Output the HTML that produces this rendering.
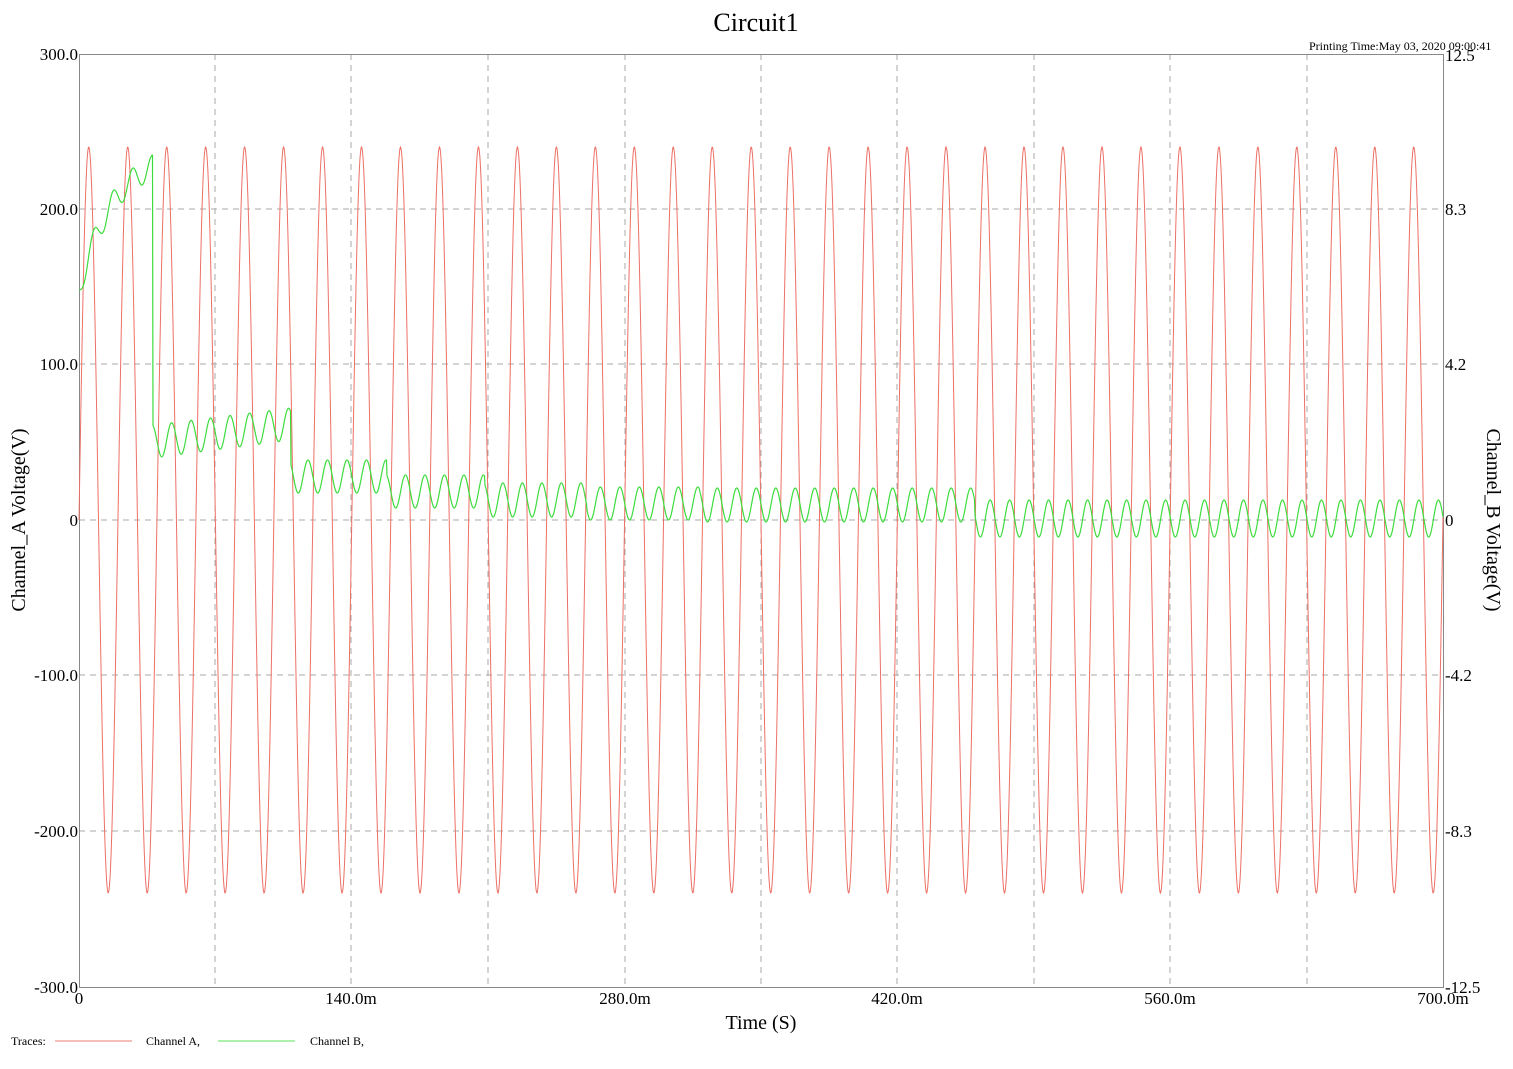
<!DOCTYPE html>
<html><head><meta charset="utf-8"><style>
html,body{margin:0;padding:0;background:#fff;}
svg{display:block;}
text{font-family:"Liberation Serif",serif;fill:#000;}
</style></head><body>
<svg id="s" width="1513" height="1069" viewBox="0 0 1513 1069" xmlns="http://www.w3.org/2000/svg">
<text x="756" y="31" font-size="26" text-anchor="middle">Circuit1</text>
<text x="1309" y="50" font-size="12">Printing Time:May 03, 2020 09:00:41</text>
<g stroke="#aaa" stroke-width="1" stroke-dasharray="6,5" fill="none">
<line x1="215" y1="54" x2="215" y2="987"/><line x1="351" y1="54" x2="351" y2="987"/>
<line x1="488" y1="54" x2="488" y2="987"/><line x1="625" y1="54" x2="625" y2="987"/>
<line x1="761" y1="54" x2="761" y2="987"/><line x1="897" y1="54" x2="897" y2="987"/>
<line x1="1034" y1="54" x2="1034" y2="987"/><line x1="1170" y1="54" x2="1170" y2="987"/>
<line x1="1307" y1="54" x2="1307" y2="987"/>
<line x1="79" y1="209" x2="1443" y2="209"/><line x1="79" y1="364" x2="1443" y2="364"/>
<line x1="79" y1="520" x2="1443" y2="520"/><line x1="79" y1="675" x2="1443" y2="675"/>
<line x1="79" y1="831" x2="1443" y2="831"/>
</g>
<rect x="79.5" y="54.5" width="1364" height="933" fill="none" stroke="#888" stroke-width="1"/>
<g id="traces"></g>
<g font-size="17">
<text x="78" y="60" text-anchor="end">300.0</text>
<text x="78" y="215" text-anchor="end">200.0</text>
<text x="78" y="370" text-anchor="end">100.0</text>
<text x="78" y="526" text-anchor="end">0</text>
<text x="78" y="681" text-anchor="end">-100.0</text>
<text x="78" y="837" text-anchor="end">-200.0</text>
<text x="78" y="993" text-anchor="end">-300.0</text>
<text x="1445" y="61">12.5</text>
<text x="1445" y="215">8.3</text>
<text x="1445" y="370">4.2</text>
<text x="1445" y="526">0</text>
<text x="1445" y="681">-4.2</text>
<text x="1445" y="837">-8.3</text>
<text x="1445" y="993">-12.5</text>
<text x="79" y="1004" text-anchor="middle">0</text>
<text x="351" y="1004" text-anchor="middle">140.0m</text>
<text x="625" y="1004" text-anchor="middle">280.0m</text>
<text x="897" y="1004" text-anchor="middle">420.0m</text>
<text x="1170" y="1004" text-anchor="middle">560.0m</text>
<text x="1443" y="1004" text-anchor="middle">700.0m</text>
</g>
<text x="761" y="1029" font-size="20" text-anchor="middle">Time (S)</text>
<text transform="translate(25,520) rotate(-90)" font-size="20" text-anchor="middle">Channel_A Voltage(V)</text>
<text transform="translate(1487,520) rotate(90)" font-size="20" text-anchor="middle">Channel_B Voltage(V)</text>
<g font-size="12">
<text x="11" y="1045">Traces:</text>
<line x1="55" y1="1041" x2="132" y2="1041" stroke="#f2a9a0" stroke-width="1.5"/>
<text x="146" y="1045">Channel A,</text>
<line x1="218" y1="1041" x2="295" y2="1041" stroke="#90ee90" stroke-width="1.5"/>
<text x="310" y="1045">Channel B,</text>
</g>
</svg>
<script>
(function(){
var g=document.getElementById('traces'),NS='http://www.w3.org/2000/svg';
var pr=[],pg=[];
for(var x=79;x<=1443;x+=0.5){
 var y=520-373*Math.sin(2*Math.PI*(x-79)/38.97);
 pr.push(x.toFixed(1)+','+y.toFixed(1));
}
var segs=[[153,291,425,458,408,440],[291,387,460,493],[387,485,475,508],[485,587,483,517],[587,700,487,520],[700,975,488,522],[975,1444,500,537]];
var P=19.49;
for(var x=79;x<=1443;x+=0.5){
 var c=0.5*(1+Math.cos(2*Math.PI*((x-79)/P-0.75)));
 var pk,tr;
 if(x<153){var m=150+140*Math.exp(-(x-79)/35);pk=m-12;tr=m+12;}
 else{for(var i=0;i<segs.length;i++){var s=segs[i];if(x>=s[0]&&x<s[1]){var t=(x-s[0])/(s[1]-s[0]);pk=s[2];tr=s[3];if(s.length>4){pk=s[2]+(s[4]-s[2])*t;tr=s[3]+(s[5]-s[3])*t;}break;}}}
 var y=tr+(pk-tr)*c;
 pg.push(x.toFixed(1)+','+y.toFixed(1));
}
function pl(p,col,w){var e=document.createElementNS(NS,'polyline');e.setAttribute('points',p.join(' '));e.setAttribute('fill','none');e.setAttribute('stroke',col);e.setAttribute('stroke-width',w);g.appendChild(e);}
pl(pr,'#ec7066','1');pl(pg,'#3ddc3d','1.2');
})();
</script>
</body></html>
